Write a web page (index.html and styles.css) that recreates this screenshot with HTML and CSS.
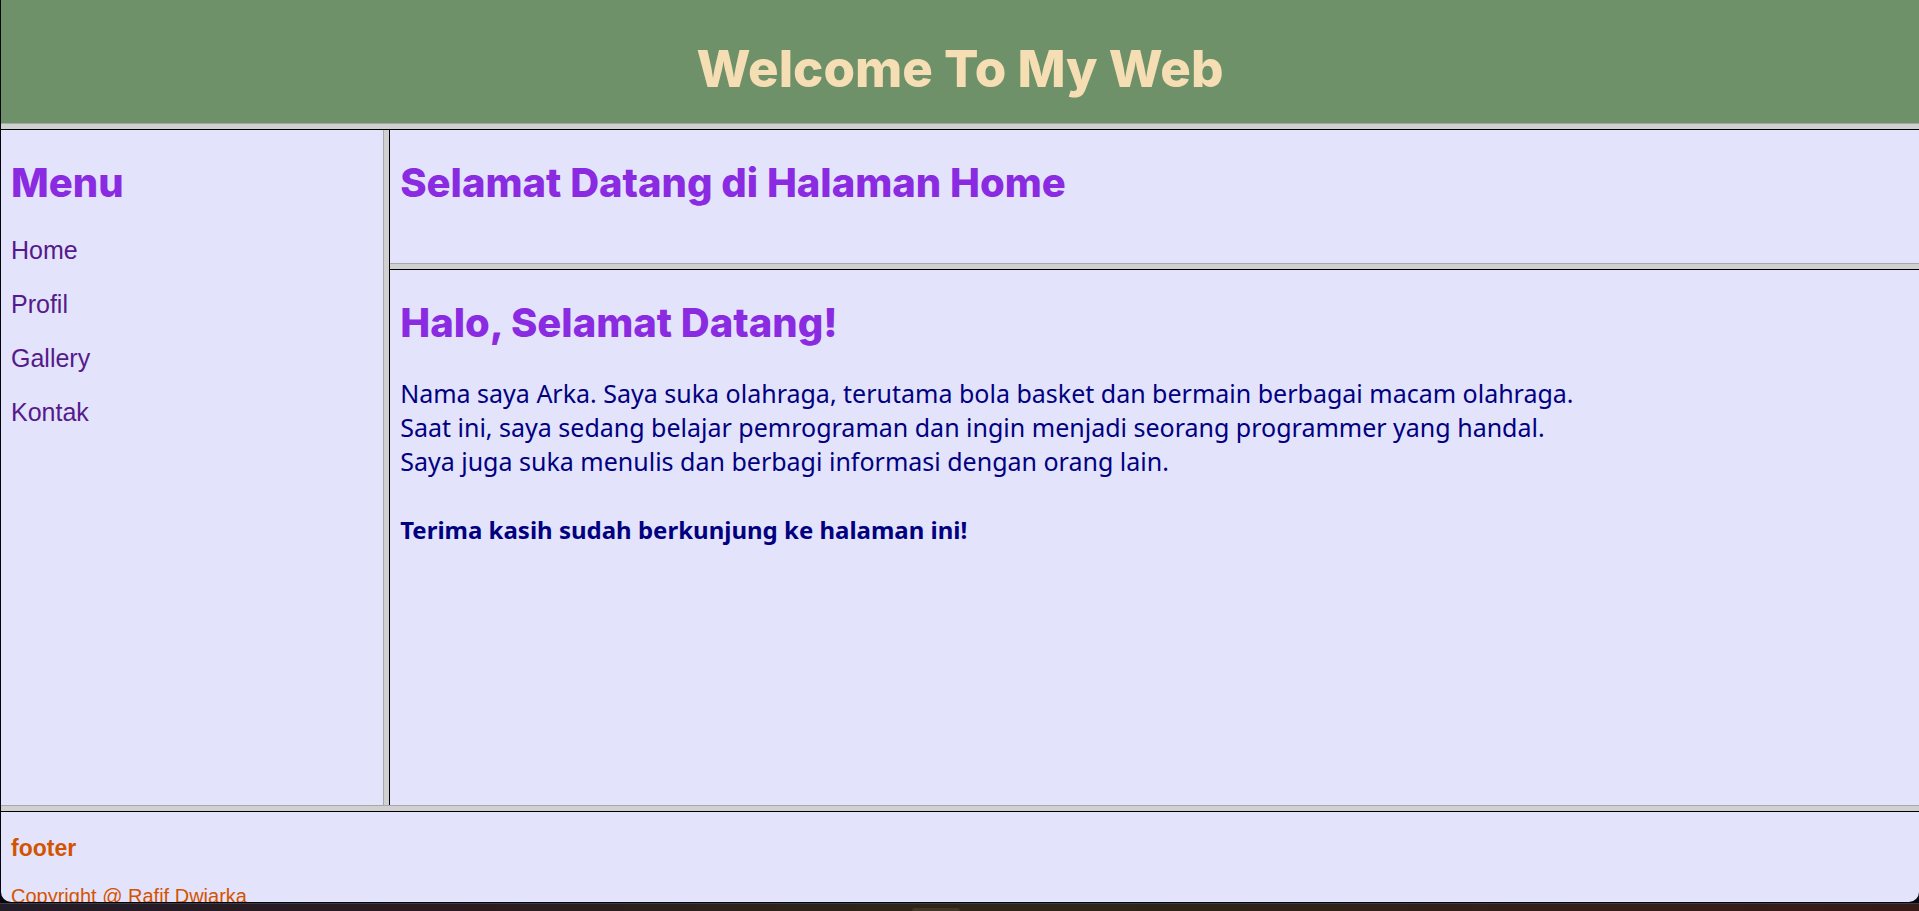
FILE: index.html
```
<!DOCTYPE html>
<html lang="id">
<head>
<meta charset="utf-8">
<title>Welcome To My Web</title>
<link rel="stylesheet" href="styles.css">
</head>
<body>
<div class="window">
  <header class="banner"><h1 class="banner-title">Welcome To My Web</h1></header>
  <div class="divider"></div>
  <div class="middle">
    <nav class="sidebar">
      <h2 class="title">Menu</h2>
      <a class="menu-link" href="#home">Home</a>
      <a class="menu-link" href="#profil">Profil</a>
      <a class="menu-link" href="#gallery">Gallery</a>
      <a class="menu-link" href="#kontak">Kontak</a>
    </nav>
    <div class="divider divider-vertical"></div>
    <div class="content">
      <section class="pane pane-top"><h2 class="title">Selamat Datang di Halaman Home</h2></section>
      <div class="divider"></div>
      <main class="pane">
        <h2 class="title">Halo, Selamat Datang!</h2>
        <p class="text">Nama saya Arka. Saya suka olahraga, terutama bola basket dan bermain berbagai macam olahraga.<br>
        Saat ini, saya sedang belajar pemrograman dan ingin menjadi seorang programmer yang handal.<br>
        Saya juga suka menulis dan berbagi informasi dengan orang lain.<br><br>
        <b class="thanks">Terima kasih sudah berkunjung ke halaman ini!</b></p>
      </main>
    </div>
  </div>
  <div class="divider"></div>
  <footer class="footer">
    <h3 class="footer-title">footer</h3>
    <p class="copyright">Copyright @ Rafif Dwiarka</p>
  </footer>
</div>
<div class="taskbar"><span class="taskbar-item"></span></div>
</body>
</html>
```
FILE: styles.css
```
* { box-sizing: border-box; }

body {
  margin: 0;
  height: 100vh;
  display: flex;
  flex-direction: column;
  background: #05050f;
  font-family: "Liberation Sans", Arial, sans-serif;
}

.window {
  flex: 1;
  min-height: 0;
  display: flex;
  flex-direction: column;
  overflow: hidden;
  margin: 0 0 1px 1px;
  border-radius: 0 0 10px 10px;
  background: #e3e3fb;
}

.banner {
  flex: none;
  padding: 33px 8px 18px;
  background: #6f9169;
  text-align: center;
}

.banner-title {
  margin: 0;
  color: #f5deb3;
  font: 800 51px/72px Inter, sans-serif;
}

.divider {
  flex: none;
  height: 7px;
  background: #d0d0d0;
  border-top: 1px solid #a8a8a8;
  border-bottom: 1px solid #000;
}

.divider-vertical {
  height: auto;
  border-top: 0;
  border-bottom: 0;
  border-left: 1px solid #a8a8a8;
  border-right: 1px solid #000;
}

.middle {
  flex: 1;
  min-height: 0;
  display: grid;
  grid-template-columns: 1fr 7px 4fr;
}

.sidebar {
  padding: 24px 10px;
  display: flex;
  flex-direction: column;
  align-items: flex-start;
}

.title {
  margin: 0;
  color: #8a2be2;
  font: 800 40px/57px Inter, sans-serif;
}

.menu-link {
  margin-top: 25px;
  color: #551a8b;
  font-size: 25px;
  line-height: 29px;
  text-decoration: none;
}

.content {
  min-width: 0;
  display: flex;
  flex-direction: column;
}

.pane { padding: 24px 10px; }

.pane-top { padding-bottom: 52px; }

.text {
  margin: 25px 0 0;
  color: #000080;
  font: 25px/34px "Noto Sans", "Open Sans", sans-serif;
}

.thanks { font-size: 24px; }

.footer {
  flex: 0 0 10%;
  min-height: 0;
  overflow: hidden;
  padding: 23px 10px 0;
  color: #d35400;
}

.footer-title {
  margin: 0;
  font-size: 23px;
  line-height: 26px;
}

.copyright {
  margin: 24px 0 0;
  font-size: 20px;
  line-height: 23px;
}

.taskbar {
  flex: none;
  height: 8px;
  padding-left: 47.5%;
  border-top: 1px solid #3c3d47;
  background: linear-gradient(90deg, #241d28 0%, #2b1a20 22%, #2e2418 45%, #2e2418 58%, #381a17 100%);
}

.taskbar-item {
  display: block;
  width: 48px;
  height: 3px;
  margin-top: 4px;
  border-radius: 4px 4px 0 0;
  background: #403626;
}
```
